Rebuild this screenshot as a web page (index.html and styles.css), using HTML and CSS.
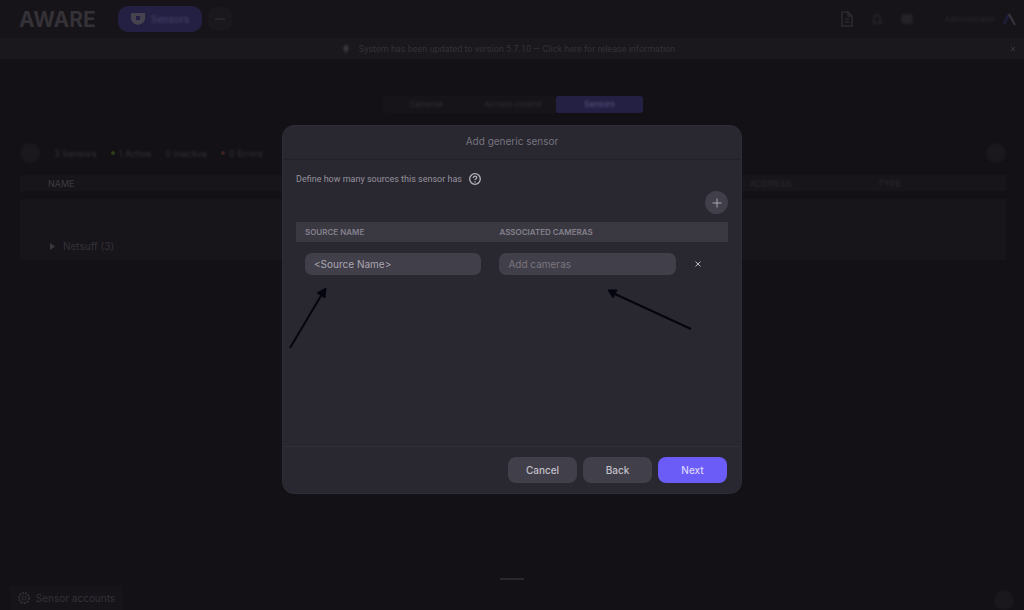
FILE: index.html
```html
<!DOCTYPE html>
<html lang="en">
<head>
<meta charset="utf-8">
<title>Add generic sensor</title>
<link rel="stylesheet" href="styles.css">
</head>
<body>

<!-- Top bar -->
<header class="topbar">
  <a class="logo" href="#">AWARE</a>
  <button class="pill" type="button">
    <svg width="14" height="12" viewBox="0 0 14 12"><path d="M0 0h14v5c0 4-3 6-7 7-4-1-7-3-7-7z" fill="#46434f"/><path d="M5 3h4v4H5z" fill="#242044"/></svg>
    <span class="faint">Sensors</span>
  </button>
  <button class="more" type="button" aria-label="More"><svg width="10" height="2"><path d="M0 1h10" stroke="#353239"/></svg></button>
  <div class="top-icons">
    <button type="button" aria-label="Reports"><svg width="14" height="16" viewBox="0 0 14 16"><path d="M8 1H2v14h10V5zM8 1v4h4M5 8h4M5 11h4" fill="none" stroke="#2c2a2f" stroke-width="1.5"/></svg></button>
    <button class="faint" type="button" aria-label="Alerts"><svg width="14" height="14"><path d="M2 11h10M4 11V6a3 3 0 0 1 6 0v5" fill="none" stroke="#242227" stroke-width="2"/></svg></button>
    <button class="faint" type="button" aria-label="Settings"><svg width="14" height="14"><rect x="1" y="2" width="12" height="10" rx="3" fill="#242227"/></svg></button>
  </div>
  <a class="account" href="#"><span class="faint">Administrator</span>
    <svg width="13" height="14" viewBox="0 0 13 14"><path d="M1 12l5-10" stroke="#1e1d38" stroke-width="3"/><path d="M6 2l6 11" stroke="#38353c" stroke-width="2"/></svg>
  </a>
</header>

<!-- Update banner -->
<div class="banner">
  <svg class="faint" width="8" height="10"><path d="M4 0l3 4-3 6-3-6z" fill="#39363d"/></svg>
  <a href="#">System has been updated to version 5.7.10 — Click here for release information</a>
  <button type="button" aria-label="Dismiss"><svg width="6" height="6"><path d="M1 1l4 4M5 1L1 5" stroke="#38353c"/></svg></button>
</div>

<!-- Page behind the dialog -->
<main class="page">
  <nav class="tabs">
    <a href="#"><span class="faint">Cameras</span></a>
    <a href="#"><span class="faint">Access control</span></a>
    <a class="active" href="#"><span class="faint">Sensors</span></a>
  </nav>

  <div class="toolbar">
    <button class="round faint" type="button" aria-label="Search"></button>
    <span class="stat faint">3 Sensors</span>
    <span class="stat"><i class="dot green"></i><span class="faint">1 Active</span></span>
    <span class="stat faint">0 Inactive</span>
    <span class="stat"><i class="dot red"></i><span class="faint">0 Errors</span></span>
    <button class="round faint end" type="button" aria-label="Options"></button>
  </div>

  <table class="sensors">
    <thead>
      <tr><th class="name">NAME</th><th><span class="faint">ADDRESS</span></th><th><span class="faint">TYPE</span></th></tr>
    </thead>
    <tbody>
      <tr><td colspan="3"><svg width="5" height="7"><path d="M0 0l5 3.5-5 3.5z" fill="#3a373d"/></svg>Netsuff (3)</td></tr>
    </tbody>
  </table>
</main>

<footer class="bottom">
  <button class="accounts" type="button">
    <svg width="14" height="14" viewBox="0 0 14 14" fill="none" stroke="#302d34"><circle cx="7" cy="7" r="5" stroke-width="2" stroke-dasharray="2 1"/><circle cx="7" cy="7" r="2"/></svg>
    Sensor accounts
  </button>
  <span class="handle"></span>
  <button class="round help faint" type="button" aria-label="Help"></button>
</footer>

<!-- Add sensor dialog -->
<div class="overlay">
  <form class="modal" role="dialog" aria-labelledby="title">
    <h1 id="title">Add generic sensor</h1>

    <div class="modal-body">
      <p class="intro">Define how many sources this sensor has
        <svg width="12" height="12" viewBox="0 0 12 12" fill="none" stroke="#b5b3bc" stroke-width="1.3"><circle cx="6" cy="6" r="5.3"/><path d="M4.300 4.900c0-2.300 3.500-2.200 3.400-.1 0 1.100-1.700 1.200-1.700 2.300M6 8.200v1.200"/></svg>
      </p>
      <button class="add" type="button" aria-label="Add source"><svg width="10" height="10"><path d="M5 .5v9M.5 5h9" stroke="#aaa7b1"/></svg></button>

      <table class="sources">
        <thead>
          <tr><th>SOURCE NAME</th><th>ASSOCIATED CAMERAS</th><th></th></tr>
        </thead>
        <tbody>
          <tr>
            <td><input type="text" value="&lt;Source Name&gt;" aria-label="Source name"></td>
            <td><input type="text" placeholder="Add cameras" aria-label="Associated cameras"></td>
            <td><button class="remove" type="button" aria-label="Remove source"><svg width="8" height="8"><path d="M1.500 1.500l5 5M6.500 1.500l-5 5" stroke="#bbb9c1"/></svg></button></td>
          </tr>
        </tbody>
      </table>

      <svg class="arrows" width="460" height="80" viewBox="0 0 460 80" fill="#05050f" stroke="#05050f">
        <path d="M7 68L39 14" stroke-width="2"/><path d="M43 8L34 13l8 5z"/>
        <path d="M408 49L332 14" stroke-width="2"/><path d="M325 10l9 0-4 8z"/>
      </svg>
    </div>

    <div class="actions">
      <button type="button">Cancel</button>
      <button type="button">Back</button>
      <button class="primary" type="submit">Next</button>
    </div>
  </form>
</div>

</body>
</html>
```
FILE: styles.css
```css
* {
  box-sizing: border-box;
}

body {
  margin: 0;
  min-height: 100vh;
  display: flex;
  flex-direction: column;
  font-family: Inter, "Liberation Sans", sans-serif;
  font-size: 9px;
  color: #343138;
  background-color: #131116;
}

a {
  color: inherit;
  text-decoration: none;
}

button {
  display: flex;
  align-items: center;
  justify-content: center;
  padding: 0;
  border: 0;
  font: inherit;
  color: inherit;
  background: none;
}

svg {
  flex: none;
}

/* Out of focus labels behind the dialog */
.faint {
  filter: blur(1px);
}

/* Top bar */
.topbar {
  display: flex;
  align-items: center;
  height: 38px;
  padding: 0 8px 0 19px;
  background-color: #161419;
}

.logo {
  width: 99px;
  font-size: 21px;
  font-weight: bold;
  color: #343137;
}

.pill {
  gap: 6px;
  width: 84px;
  height: 26px;
  border-radius: 10px;
  font-size: 10px;
  color: #48446a;
  background-color: #242044;
}

.more {
  width: 24px;
  height: 24px;
  margin-left: 6px;
  border-radius: 8px;
  background-color: #1a181d;
}

.top-icons {
  display: flex;
  gap: 16px;
  margin-left: auto;
}

.account {
  display: flex;
  align-items: center;
  gap: 8px;
  margin-left: 30px;
  font-size: 8px;
  color: #29272c;
}

/* Banner */
.banner {
  display: flex;
  align-items: center;
  gap: 9px;
  height: 21px;
  padding: 0 8px 0 16px;
  font-family: Roboto, sans-serif;
  background-color: #1a181c;
}

.banner svg:first-child {
  margin-left: auto;
}

.banner button {
  margin-left: auto;
}

/* Page */
.page {
  flex: 1;
  padding: 37px 18px 0 20px;
}

.tabs {
  display: flex;
  width: 260px;
  margin: 0 auto;
  border-radius: 3px;
  background-color: #161419;
}

.tabs a {
  flex: 1;
  line-height: 17px;
  text-align: center;
  color: #323035;
  font-size: 8px;
}

.tabs .active {
  border-radius: 3px;
  color: #5a5680;
  background-color: #242044;
}

.toolbar {
  display: flex;
  align-items: center;
  gap: 14px;
  height: 20px;
  margin: 30px 0 12px;
  font-size: 9px;
}

.round {
  width: 20px;
  height: 20px;
  border-radius: 50%;
  background-color: #1a181d;
}

.end {
  margin-left: auto;
}

.stat {
  display: flex;
  align-items: center;
  gap: 4px;
}

.dot {
  width: 4px;
  height: 4px;
  border-radius: 50%;
}

.green {
  background-color: #283f18;
}

.red {
  background-color: #3b2020;
}

.sensors {
  width: 100%;
  border-collapse: collapse;
}

.sensors th {
  width: 13%;
  height: 20px;
  padding: 0;
  text-align: left;
  font-weight: normal;
  font-size: 9px;
  color: #2c2a2f;
  background-color: #17151a;
}

.sensors .name {
  width: 74%;
  padding-left: 28px;
  color: #3e3b41;
}

.sensors td {
  height: 65px;
  padding: 0 0 8px 30px;
  vertical-align: bottom;
  font-size: 10px;
  background-color: #17151a;
  border-top: 8px solid #131116;
}

.sensors td svg {
  margin-right: 8px;
}

/* Bottom bar */
.bottom {
  display: grid;
  grid-template-columns: 1fr auto 1fr;
  align-items: end;
  height: 34px;
  padding: 0 10px;
}

.accounts {
  gap: 5px;
  width: 112px;
  height: 24px;
  font-size: 10px;
  background-color: #161419;
}

.handle {
  align-self: start;
  width: 24px;
  height: 2px;
  margin-top: 2px;
  background-color: #2a282d;
}

.help {
  justify-self: end;
}

/* Dialog */
.overlay {
  position: fixed;
  inset: 0;
  display: flex;
  align-items: center;
  justify-content: center;
  padding-top: 9px;
}

.modal {
  display: flex;
  flex-direction: column;
  width: 460px;
  border: 1px solid #2c2d37;
  border-radius: 12px;
  color: #84818c;
  background-color: #292730;
}

.modal h1 {
  margin: 0;
  padding: 5px 0 8px;
  border-bottom: 1px solid #222029;
  text-align: center;
  font-size: 10px;
  font-weight: normal;
  line-height: 20px;
  color: #77747f;
}

.modal-body {
  position: relative;
  min-height: 286px;
  padding: 12px 13px;
}

.intro {
  display: flex;
  align-items: center;
  gap: 7px;
  margin: 0;
  font-family: Roboto, sans-serif;
  line-height: 14px;
  color: #96939d;
}

.add {
  width: 23px;
  height: 23px;
  margin: 5px 0 8px auto;
  border-radius: 50%;
  background-color: #413f49;
}

.sources {
  width: 100%;
  border-collapse: collapse;
  table-layout: fixed;
}

.sources th {
  width: 45%;
  height: 20px;
  padding: 0 0 0 9px;
  text-align: left;
  font-size: 8px;
  font-weight: 600;
  background-color: #3a3841;
}

.sources th:last-child {
  width: 10%;
}

.sources td {
  padding: 11px 9px 0;
}

.sources input {
  display: block;
  width: 100%;
  height: 22px;
  padding: 0 9px;
  border: 0;
  border-radius: 7px;
  font: inherit;
  font-size: 10px;
  color: #aaa7b1;
  background-color: #413f49;
}

.sources input::placeholder {
  color: #797680;
}

/* Pointers to the two fields */
.arrows {
  position: absolute;
  top: 120px;
  left: 0;
  pointer-events: none;
}

.actions {
  display: flex;
  justify-content: flex-end;
  gap: 6px;
  padding: 10px 14px;
  border-top: 1px solid #302e37;
}

.actions button {
  width: 69px;
  height: 26px;
  border-radius: 8px;
  font-size: 10px;
  font-weight: 500;
  color: #c2c0c9;
  background-color: #413f49;
}

.actions .primary {
  color: #d8d4ff;
  background-color: #6c5cf7;
}
```
